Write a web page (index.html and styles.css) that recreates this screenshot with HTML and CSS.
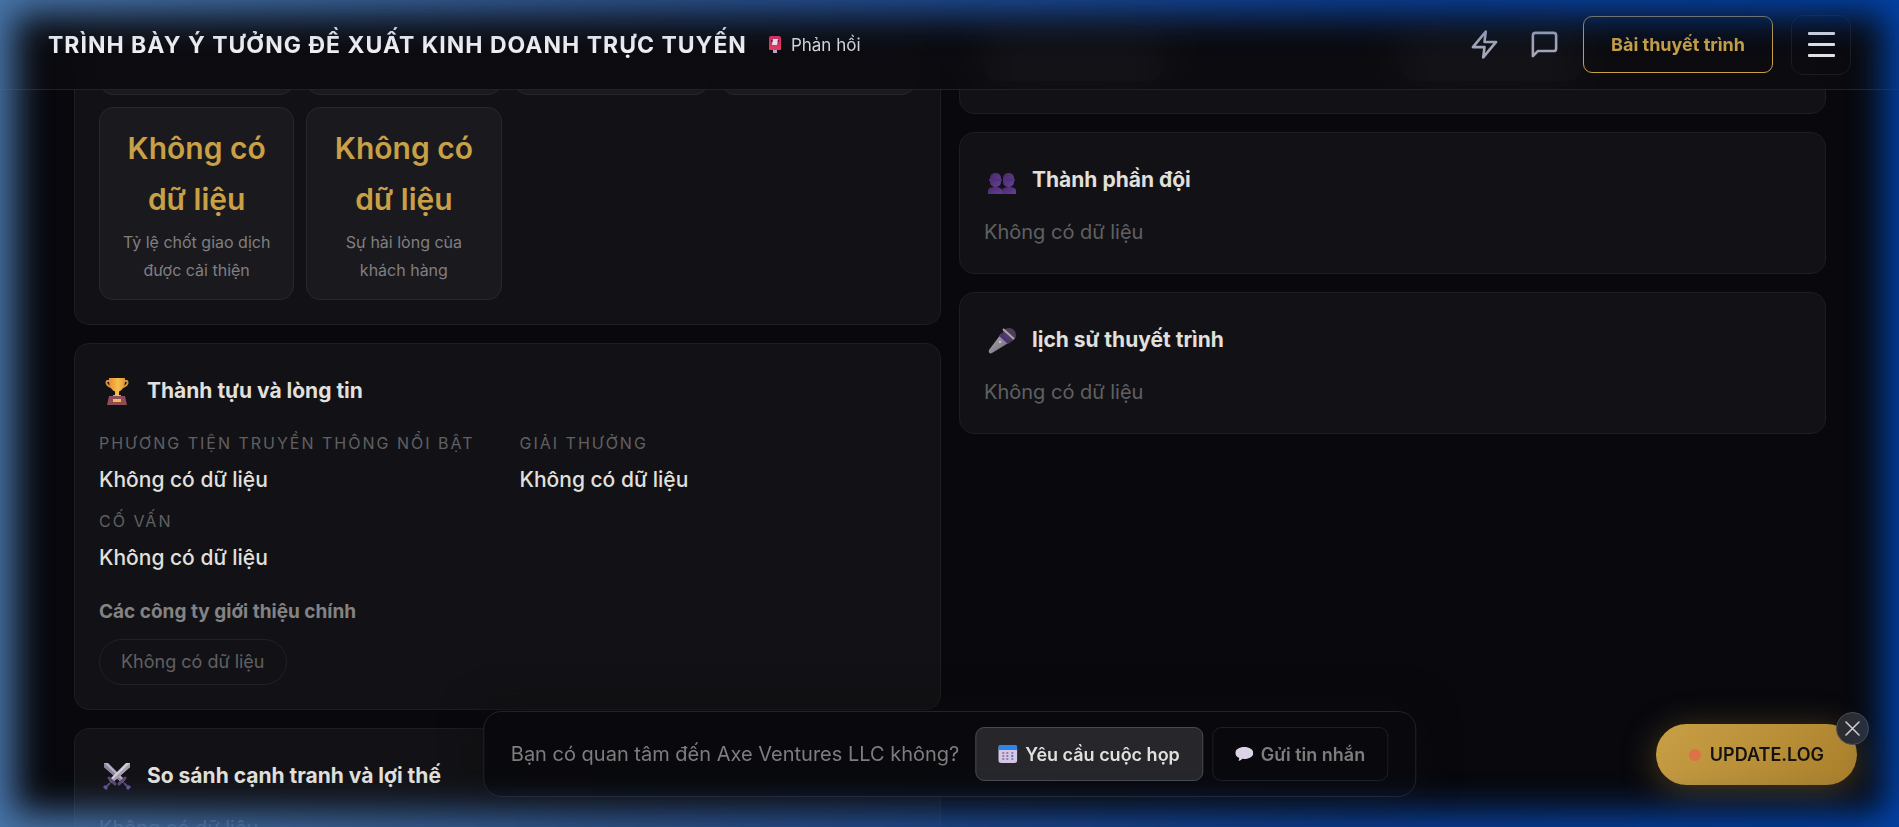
FILE: index.html
```html
<!DOCTYPE html>
<html lang="vi">

<head>
    <meta charset="UTF-8">
    <meta name="viewport" content="width=device-width, initial-scale=1.0">
    <title>Axe Ventures LLC</title>
    <link rel="stylesheet" href="styles.css">
</head>

<body>
    <header class="header">
        <div class="header__left">
            <h1 class="header__title">TRÌNH BÀY Ý TƯỞNG ĐỀ XUẤT KINH DOANH TRỰC TUYẾN</h1>
            <a href="#" class="feedback">
                <svg width="12" height="17" viewBox="0 0 12 17">
                    <rect x="4" y="13" width="4" height="4" fill="#b9a3d6" />
                    <rect width="12" height="14" rx="2" fill="#e0305f" />
                    <rect y="10" width="12" height="4" rx="1" fill="#e23a5c" />
                    <rect x="2" y="4" width="8" height="2" fill="#5b1745" />
                    <path d="M4 3h5l-1 6H3z" fill="#efe3f5" />
                </svg>
                Phản hồi
            </a>
        </div>
        <nav class="header__nav">
            <button class="icon-btn" aria-label="Cập nhật nhanh">
                <svg width="31" height="31" viewBox="0 0 24 24" fill="none" stroke="currentColor" stroke-width="2"
                    stroke-linecap="round" stroke-linejoin="round">
                    <path d="M13 2 3 14h9l-1 8 10-12h-9z" />
                </svg>
            </button>
            <button class="icon-btn" aria-label="Tin nhắn">
                <svg width="31" height="31" viewBox="0 0 24 24" fill="none" stroke="currentColor" stroke-width="2"
                    stroke-linejoin="round">
                    <path d="M21 15a2 2 0 0 1-2 2H7l-4 4V5a2 2 0 0 1 2-2h14a2 2 0 0 1 2 2z" />
                </svg>
            </button>
            <button class="pitch-btn">Bài thuyết trình</button>
            <button class="menu-btn" aria-label="Menu">
                <span></span>
                <span></span>
                <span></span>
            </button>
        </nav>
    </header>

    <main class="board">
        <div class="column">
            <section class="card card--first">
                <div class="metrics">
                    <div class="metric metric--cut"></div>
                    <div class="metric metric--cut"></div>
                    <div class="metric metric--cut"></div>
                    <div class="metric metric--cut"></div>
                    <div class="metric">
                        <div class="metric__value">Không có dữ liệu</div>
                        <div class="metric__label">Tỷ lệ chốt giao dịch được cải thiện</div>
                    </div>
                    <div class="metric">
                        <div class="metric__value">Không có dữ liệu</div>
                        <div class="metric__label">Sự hài lòng của khách hàng</div>
                    </div>
                </div>
            </section>

            <section class="card">
                <h2 class="card__title">
                    <span class="card__icon">
                        <svg width="24" height="28" viewBox="0 0 24 28">
                            <defs>
                                <linearGradient id="cup" x1="0" y1="0" x2="1" y2="0">
                                    <stop offset="0" stop-color="#e98a34" />
                                    <stop offset=".55" stop-color="#f6c04a" />
                                    <stop offset="1" stop-color="#e0963a" />
                                </linearGradient>
                            </defs>
                            <path d="M5 4H2.500C.6 4 .8 9 6.500 10M19 4h2.500c1.900 0 1.700 5-4 6" fill="none"
                                stroke="#d9953c" stroke-width="1.800" />
                            <path d="M4 1h16c.5 7-1.500 11.500-6 13.500V18h2v2H8v-2h2v-3.500C5.500 12.500 3.500 8 4 1z"
                                fill="url(#cup)" />
                            <path d="M4 19h16l2 9H2z" fill="#8d4c58" />
                            <rect x="8" y="22" width="8" height="3" fill="#f3bb4e" />
                        </svg>
                    </span>
                    Thành tựu và lòng tin
                </h2>
                <dl class="facts">
                    <div class="fact">
                        <dt>PHƯƠNG TIỆN TRUYỀN THÔNG NỔI BẬT</dt>
                        <dd>Không có dữ liệu</dd>
                    </div>
                    <div class="fact">
                        <dt>GIẢI THƯỞNG</dt>
                        <dd>Không có dữ liệu</dd>
                    </div>
                    <div class="fact">
                        <dt>CỐ VẤN</dt>
                        <dd>Không có dữ liệu</dd>
                    </div>
                </dl>
                <h3 class="card__subtitle">Các công ty giới thiệu chính</h3>
                <span class="chip">Không có dữ liệu</span>
            </section>

            <section class="card">
                <h2 class="card__title">
                    <span class="card__icon">
                        <svg width="28" height="28" viewBox="0 0 28 28">
                            <path d="M1 1h4l17 17-3 3L1 5z" fill="#b5adc0" />
                            <path d="M1 1l20 19-2 1L1 5z" fill="#8b8299" />
                            <path d="M27 1h-4L6 18l3 3L27 5z" fill="#d3ccdb" />
                            <path d="M27 1 7 20l2 1L27 5z" fill="#a59bb2" />
                            <path d="M6 16l6 6M22 16l-6 6" stroke="#604777" stroke-width="3" stroke-linecap="round" />
                            <path d="M7 21l-4 4M21 21l4 4" stroke="#604777" stroke-width="2" />
                            <path d="M1 24l3 3M27 24l-3 3" stroke="#6252a6" stroke-width="3" />
                        </svg>
                    </span>
                    So sánh cạnh tranh và lợi thế
                </h2>
                <p class="card__empty">Không có dữ liệu</p>
            </section>
        </div>

        <div class="column">
            <section class="card card--top">
                <div class="shade"></div>
                <div class="shade"></div>
            </section>

            <section class="card">
                <h2 class="card__title">
                    <span class="card__icon card__icon--low">
                        <svg width="28" height="22" viewBox="0 0 28 22">
                            <defs>
                                <linearGradient id="bust" x1="0" y1="0" x2="1" y2="1">
                                    <stop offset="0" stop-color="#482963" />
                                    <stop offset="1" stop-color="#653f9c" />
                                </linearGradient>
                            </defs>
                            <path d="M0 22v-3c0-3 3-4 7-4s7 1 7 4v3z" fill="url(#bust)" />
                            <path d="M14 22v-3c0-3 3-4 7-4s7 1 7 4v3z" fill="url(#bust)" />
                            <rect x="2" y="1" width="11" height="14" rx="5" fill="url(#bust)" />
                            <rect x="15" y="1" width="11" height="14" rx="5" fill="url(#bust)" />
                            <path d="M1 8h13M15 8h12" stroke="#503078" stroke-width="2" />
                        </svg>
                    </span>
                    Thành phần đội
                </h2>
                <p class="card__empty">Không có dữ liệu</p>
            </section>

            <section class="card">
                <h2 class="card__title">
                    <span class="card__icon">
                        <svg width="28" height="27" viewBox="0 0 28 27">
                            <defs>
                                <linearGradient id="mic" x1="0" y1="0" x2="1" y2="1">
                                    <stop offset="0" stop-color="#b3adb9" />
                                    <stop offset="1" stop-color="#6a6372" />
                                </linearGradient>
                            </defs>
                            <circle cx="21" cy="8" r="7" fill="#4c4058" />
                            <path d="M13 7 22 15 4 26c-2 1-4 0-3-3z" fill="url(#mic)" />
                            <path d="M13 6l10 9-3 2-9-8z" fill="#4d3176" />
                            <path d="M15 2l11 10" stroke="#aaa3b4" stroke-width="2" />
                            <circle cx="12" cy="15" r="1" fill="#ded8e5" />
                        </svg>
                    </span>
                    lịch sử thuyết trình
                </h2>
                <p class="card__empty">Không có dữ liệu</p>
            </section>
        </div>
    </main>

    <div class="contact-bar">
        <p class="contact-bar__text">Bạn có quan tâm đến Axe Ventures LLC không?</p>
        <div class="contact-bar__actions">
            <button class="btn btn--primary">
                <svg width="19" height="18" viewBox="0 0 19 18">
                    <rect width="19" height="18" rx="3" fill="#d5c6e6" />
                    <path d="M0 5V3a3 3 0 0 1 3-3h13a3 3 0 0 1 3 3v2z" fill="#2a86e8" />
                    <path d="M4 7h2v2H4zm4 0h2v2H8zm5 0h2v2h-2zM4 10h2v2H4zm4 0h2v2H8zM4 13h2v2H4zm4 0h2v2H8zm5 0h2v2h-2z"
                        fill="#8f83a3" />
                    <path d="M13 10h2v2h-2z" fill="#2a86e8" />
                </svg>
                Yêu cầu cuộc họp
            </button>
            <button class="btn">
                <svg width="18" height="14" viewBox="0 0 18 14">
                    <path d="M9 0c5 0 9 2.500 9 6s-4 6-9 6l-2-.2C6 13 4.500 14 3 13.500c.8-.8 1-1.500.9-2.500C1.500 10 0 8.200 0 6c0-3.500 4-6 9-6z"
                        fill="#dcd3e6" />
                </svg>
                Gửi tin nhắn
            </button>
        </div>
    </div>

    <div class="update">
        <button class="update__btn"><span class="update__dot"></span>UPDATE.LOG</button>
        <button class="update__close" aria-label="Đóng">
            <svg width="15" height="15" viewBox="0 0 15 15" stroke="currentColor" stroke-width="1.600"
                stroke-linecap="round">
                <path d="M1 1l13 13M14 1 1 14" />
            </svg>
        </button>
    </div>

    <div class="edge-glow"><div class="edge-glow__frame"></div></div>
</body>

</html>
```

FILE: styles.css
```css
* {
    box-sizing: border-box;
    margin: 0;
    padding: 0;
}

body {
    height: 100vh;
    overflow: hidden;
    background-color: #08080d;
    color: #e2e0dc;
    font-family: Inter, "Liberation Sans", sans-serif;
    font-size: 20px;
    line-height: 34px;
}

button {
    font-family: inherit;
    cursor: pointer;
}

svg {
    display: block;
    flex-shrink: 0;
}

/* header */
.header {
    position: fixed;
    top: 0;
    left: 0;
    right: 0;
    z-index: 10;
    height: 90px;
    padding: 0 48px;
    display: flex;
    align-items: center;
    justify-content: space-between;
    background-color: rgba(11, 11, 15, 0.85);
    border-bottom: 1px solid #222226;
    backdrop-filter: blur(20px);
}

.header__left {
    display: flex;
    align-items: center;
    gap: 22px;
}

.header__title {
    font-size: 23px;
    font-weight: 700;
    letter-spacing: 1px;
    color: #f0f0f2;
    white-space: nowrap;
}

.feedback {
    display: flex;
    align-items: center;
    gap: 10px;
    font-size: 17px;
    color: #d8d8dc;
    text-decoration: none;
}

.header__nav {
    display: flex;
    align-items: center;
}

.icon-btn {
    width: 60px;
    height: 60px;
    display: flex;
    align-items: center;
    justify-content: center;
    border: none;
    background: none;
    color: #a5a6b8;
}

.pitch-btn {
    height: 57px;
    margin: 0 18px 0 9px;
    padding: 0 27px;
    border: 1px solid #c9a046;
    border-radius: 9px;
    background: none;
    color: #c9a046;
    font-size: 18px;
    font-weight: 700;
}

.menu-btn {
    width: 60px;
    height: 60px;
    display: flex;
    flex-direction: column;
    align-items: center;
    justify-content: center;
    gap: 8px;
    border: 1px solid #1c1c21;
    border-radius: 12px;
    background: none;
}

.menu-btn span {
    width: 27px;
    height: 3px;
    border-radius: 1px;
    background-color: #e2e2e6;
}

/* board */
.board {
    padding: 0 73px 0 74px;
    display: grid;
    grid-template-columns: 1fr 1fr;
    gap: 18px;
    align-items: start;
}

.column {
    display: grid;
    gap: 18px;
}

.card {
    padding: 24px;
    border: 1px solid #1e1e22;
    border-radius: 15px;
    background-color: #121216;
}

.card--first {
    padding-top: 0;
    border-top: none;
    border-radius: 0 0 15px 15px;
}

.card--top {
    height: 114px;
    padding-top: 30px;
    display: flex;
    justify-content: space-between;
    border-radius: 0 0 15px 15px;
}

.shade {
    width: 180px;
    height: 50px;
    margin-right: 220px;
    border-radius: 15px;
    background-color: #48484e;
}

.card__title {
    height: 46px;
    margin-bottom: 12px;
    display: flex;
    align-items: center;
    gap: 12px;
    font-size: 21px;
    font-weight: 700;
}

.card__icon {
    width: 36px;
    display: flex;
    justify-content: center;
}

.card__icon--low {
    padding-top: 5px;
}

.card__empty {
    color: #606062;
}

.metrics {
    display: grid;
    grid-template-columns: repeat(4, 1fr);
    gap: 12px;
}

.metric {
    padding: 15px;
    border: 1px solid #28282c;
    border-radius: 14px;
    background-color: #1a1a1e;
    text-align: center;
}

.metric--cut {
    height: 95px;
}

.metric__value {
    margin-bottom: 3px;
    color: #c9a046;
    font-size: 30px;
    font-weight: 600;
    line-height: 51px;
}

.metric__label {
    color: #807f80;
    font-size: 16px;
    line-height: 28px;
}

.facts {
    padding-top: 4px;
    display: grid;
    grid-template-columns: 1fr 1fr;
    gap: 11px 24px;
}

.fact dt {
    margin-bottom: 6px;
    color: #606062;
    font-size: 16px;
    line-height: 27px;
    letter-spacing: 2px;
}

.fact dd {
    font-size: 21px;
    font-weight: 500;
}

.card__subtitle {
    margin: 20px 0 10px;
    color: #848383;
    font-size: 19px;
    font-weight: 700;
}

.chip {
    display: inline-block;
    padding: 5px 21px;
    border: 1px solid #222226;
    border-radius: 23px;
    color: #606062;
    font-size: 18px;
    vertical-align: top;
}

/* floating bar */
.contact-bar {
    position: fixed;
    left: 50%;
    bottom: 30px;
    z-index: 5;
    transform: translateX(-50%);
    padding: 15px 27px;
    display: flex;
    align-items: center;
    gap: 16px;
    border: 1px solid #242428;
    border-radius: 18px;
    background-color: #09090d;
    box-shadow: 0 0 40px rgba(14, 14, 14, 0.9);
    white-space: nowrap;
}

.contact-bar__text {
    color: #7e7d7e;
}

.contact-bar__actions {
    display: flex;
    gap: 9px;
}

.btn {
    height: 54px;
    padding: 0 22px;
    display: flex;
    align-items: center;
    gap: 8px;
    border: 1px solid #1f1f23;
    border-radius: 9px;
    background: none;
    color: #7e7d7e;
    font-size: 18px;
    font-weight: 600;
}

.btn--primary {
    border-color: #4a4a4f;
    background-color: #26262b;
    color: #e2e0dc;
}

.update {
    position: fixed;
    right: 42px;
    bottom: 42px;
    z-index: 5;
}

.update__btn {
    height: 61px;
    padding: 0 33px;
    display: flex;
    align-items: center;
    gap: 9px;
    border: none;
    border-radius: 31px;
    background: linear-gradient(135deg, #c9a046, #a97e2a);
    box-shadow: 0 6px 36px rgba(201, 160, 70, 0.35);
    color: #141210;
    font-size: 18px;
    font-weight: 600;
}

.update__dot {
    width: 12px;
    height: 12px;
    border-radius: 50%;
    background-color: #dc7246;
}

.update__close {
    position: absolute;
    top: -12px;
    right: -12px;
    width: 33px;
    height: 33px;
    display: flex;
    align-items: center;
    justify-content: center;
    border: 1px solid #4d4f54;
    border-radius: 50%;
    background-color: #2c2d31;
    color: #d0d0d2;
}

/* blue light round the window edge */
.edge-glow {
    position: fixed;
    inset: 0;
    z-index: 20;
    overflow: hidden;
    pointer-events: none;
}

.edge-glow__frame {
    position: absolute;
    inset: -60px;
    border: 75px solid;
    border-image: linear-gradient(90deg, #4a78ac, #2c5590 35%, #0a4098 70%, #0042a8) 75;
    filter: blur(17px);
}
```
